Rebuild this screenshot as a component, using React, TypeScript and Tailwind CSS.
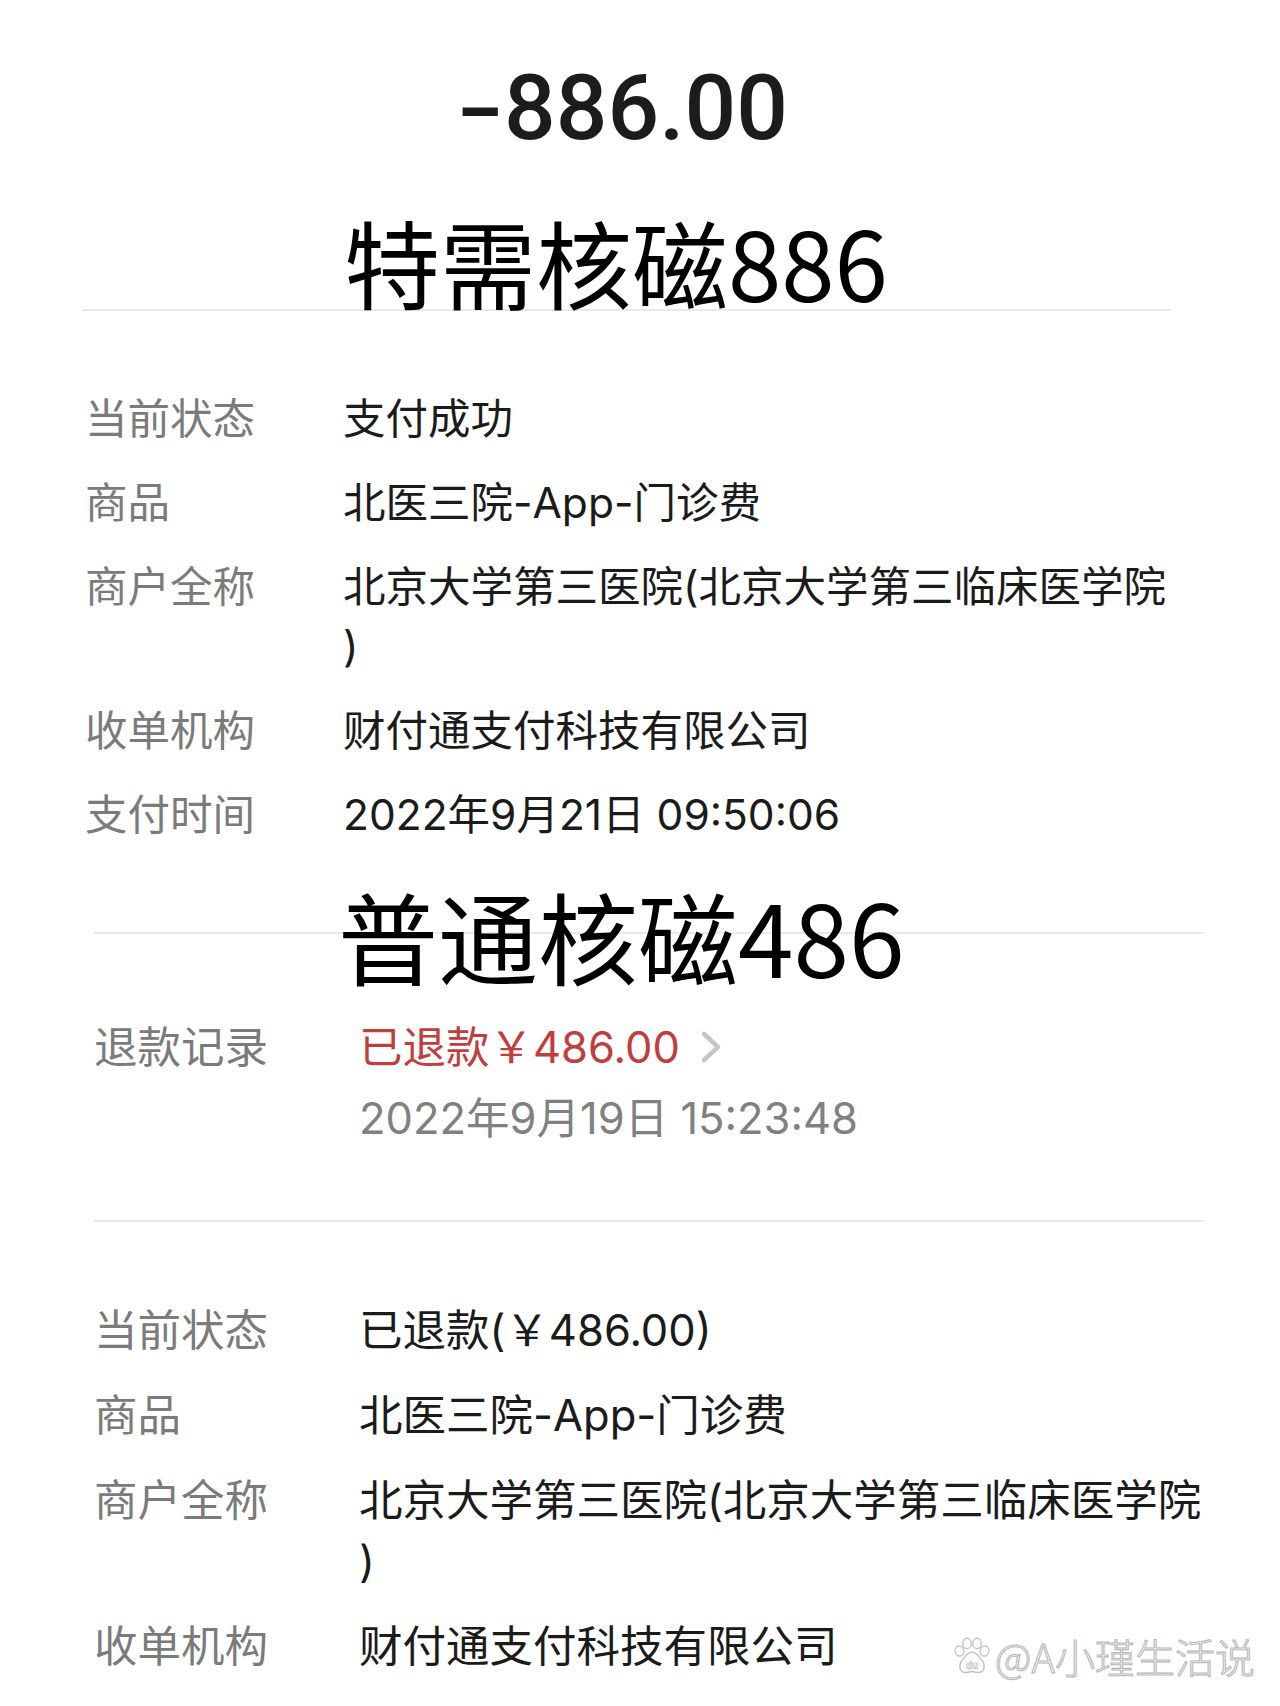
import React from "react";

function Row({
  label,
  children,
  labelW,
}: {
  label: string;
  children: React.ReactNode;
  labelW: string;
}) {
  return (
    <div className="flex">
      <div className={`${labelW} shrink-0 text-[#7b7b7b]`}>{label}</div>
      <div className="flex-1 text-[#1b1b1b]">{children}</div>
    </div>
  );
}

function Paw() {
  return (
    <svg width="38" height="38" viewBox="0 0 38 38" fill="none">
      <g stroke="#c4c4c4" strokeWidth="1.4" fill="#fbfbfb">
        <ellipse cx="6.5" cy="14" rx="4.3" ry="5.2" transform="rotate(-15 6.5 14)" />
        <ellipse cx="14" cy="6.5" rx="4.3" ry="5.2" />
        <ellipse cx="24" cy="6.5" rx="4.3" ry="5.2" />
        <ellipse cx="31.5" cy="14" rx="4.3" ry="5.2" transform="rotate(15 31.5 14)" />
        <path d="M19 15 C14 15 12 20 9 23.5 C5.5 27.5 6 35 12 35.5 C15 35.8 16.5 34.5 19 34.5 C21.5 34.5 23 35.8 26 35.5 C32 35 32.5 27.5 29 23.5 C26 20 24 15 19 15 Z" />
      </g>
      <text
        x="19"
        y="31.5"
        textAnchor="middle"
        fontSize="10"
        fontFamily="Liberation Sans, sans-serif"
        fontWeight="700"
        fill="#fbfbfb"
        stroke="#bdbdbd"
        strokeWidth="0.6"
      >
        du
      </text>
    </svg>
  );
}

export default function App() {
  return (
    <div className="relative w-[1280px] h-[1706px] overflow-hidden bg-white font-['Inter','Noto_Sans_CJK_SC',sans-serif]">
      {/* Section 1 */}
      <div className="ml-[82px] w-[1089px] pt-[63px]">
        <div className="text-center font-['Roboto',sans-serif] font-medium text-[91px] leading-[91px] tracking-[0px] text-[#1c1c1c]">
          <span className="inline-block scale-x-[1.5] mr-[8px]">-</span>886.00
        </div>
        <div className="mt-[59px] pl-[262px] text-[96px] leading-[96px] font-normal text-black font-['Noto_Sans_CJK_SC',sans-serif]">
          特需核磁886
        </div>
        <div className="h-[2px] bg-[#e9e9e9]"></div>
        <div className="pt-[78px] pl-[3px] flex flex-col gap-[24px] text-[42.5px] leading-[60px]">
          <Row label="当前状态" labelW="w-[258px]">支付成功</Row>
          <Row label="商品" labelW="w-[258px]">北医三院-App-门诊费</Row>
          <Row label="商户全称" labelW="w-[258px]">
            北京大学第三医院(北京大学第三临床医学院
            <br />)
          </Row>
          <Row label="收单机构" labelW="w-[258px]">财付通支付科技有限公司</Row>
          <Row label="支付时间" labelW="w-[258px]">2022年9月21日 09:50:06</Row>
        </div>
      </div>

      {/* Section 2 */}
      <div className="ml-[94px] w-[1110px] mt-[87px]">
        <div className="h-[2px] bg-[#e9e9e9]"></div>
        <div className="-mt-[49px] pl-[244px] text-[100px] leading-[100px] font-normal text-black font-['Noto_Sans_CJK_SC',sans-serif]">
          普通核磁486
        </div>
        <div className="mt-[31px] flex text-[43.5px] leading-[62px]">
          <div className="w-[265px] shrink-0 text-[#7b7b7b]">退款记录</div>
          <div className="flex flex-col gap-[9px]">
            <div className="flex items-center text-[#c23d3d]">
              <span>已退款￥486.00</span>
              <svg className="ml-[20px]" width="22" height="34" viewBox="0 0 22 34" fill="none">
                <path d="M4 4 L18 17 L4 30" stroke="#c6c6c6" strokeWidth="4.5" strokeLinecap="round" strokeLinejoin="round" />
              </svg>
            </div>
            <div className="text-[#808080]">2022年9月19日 15:23:48</div>
          </div>
        </div>
        <div className="mt-[71px] h-[2px] bg-[#e9e9e9]"></div>
        <div className="pt-[78px] flex flex-col gap-[24px] text-[43.5px] leading-[61px]">
          <Row label="当前状态" labelW="w-[265px]">已退款(￥486.00)</Row>
          <Row label="商品" labelW="w-[265px]">北医三院-App-门诊费</Row>
          <Row label="商户全称" labelW="w-[265px]">
            北京大学第三医院(北京大学第三临床医学院
            <br />)
          </Row>
          <Row label="收单机构" labelW="w-[265px]">财付通支付科技有限公司</Row>
        </div>
      </div>

      {/* Watermark */}
      <div className="absolute left-[953px] top-[1633px] flex items-center gap-[4px]">
        <Paw />
        <span className="text-[40px] leading-[46px] font-light text-[#fbfbfb] [-webkit-text-stroke:1.1px_#b8b8b8] font-['Noto_Sans_CJK_SC',sans-serif]">
          @A小瑾生活说
        </span>
      </div>
    </div>
  );
}
